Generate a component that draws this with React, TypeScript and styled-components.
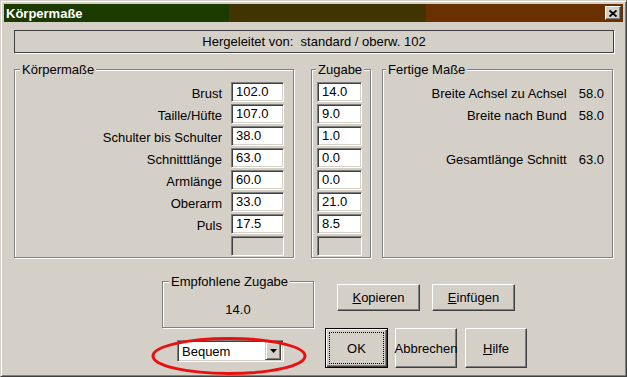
import { Fragment } from "react";
import styled, { createGlobalStyle } from "styled-components";

const Global = createGlobalStyle`
  html, body {
    margin: 0;
    padding: 0;
    background: #d4d0c8;
  }
  body {
    font-family: "Liberation Sans", Arial, sans-serif;
    font-size: 13px;
    color: #000;
  }
`;

const Window = styled.div`
  position: relative;
  width: 627px;
  height: 377px;
  box-sizing: border-box;
  background: #d4d0c8;
  border: 1px solid;
  border-color: #d4d0c8 #404040 #404040 #d4d0c8;
  box-shadow: inset 1px 1px #fff, inset -1px -1px #808080;
  padding: 3px;
`;

const Caption = styled.div`
  height: 18px;
  display: flex;
  align-items: center;
  padding: 0 2px;
  background: linear-gradient(
    to right,
    #1a3a00 0,
    #1a3a00 225px,
    #403500 225px,
    #403500 422px,
    #6b3000 422px
  );
  color: #fff;
  font-weight: bold;
  font-size: 13px;
`;

const CloseBtn = styled.div`
  margin-left: auto;
  width: 16px;
  height: 14px;
  box-sizing: border-box;
  background: #d4d0c8;
  border: 1px solid;
  border-color: #fff #404040 #404040 #fff;
  box-shadow: inset -1px -1px #808080;
  display: flex;
  align-items: center;
  justify-content: center;
`;

const Body = styled.div`
  padding: 0 9px 0 10px;
`;

const Source = styled.div`
  margin-top: 8px;
  height: 23px;
  box-sizing: border-box;
  border: 1px solid #404040;
  box-shadow: 1px 1px #fff;
  display: flex;
  align-items: center;
  justify-content: center;
  white-space: pre;
`;

const MainRow = styled.div`
  display: flex;
  margin-top: 16px;
`;

const Group = styled.div<{ $w: number; $h: number; $gap?: number }>`
  width: ${(p) => p.$w}px;
  height: ${(p) => p.$h}px;
  box-sizing: border-box;
  margin-left: ${(p) => p.$gap ?? 0}px;
  border: 1px solid #808080;
  box-shadow: inset 1px 1px #fff, 1px 1px #fff;
  display: flex;
  flex-direction: column;
`;

const Legend = styled.div<{ $inset?: number }>`
  align-self: flex-start;
  margin: -8px 0 0 ${(p) => p.$inset ?? 4}px;
  padding: 0 2px;
  height: 15px;
  line-height: 15px;
  background: #d4d0c8;
  white-space: nowrap;
`;

const Rows = styled.div<{ $cols: string; $pad: string; $colGap: number }>`
  display: grid;
  grid-template-columns: ${(p) => p.$cols};
  grid-auto-rows: 20px;
  row-gap: 2px;
  column-gap: ${(p) => p.$colGap}px;
  margin-top: 5px;
  padding: ${(p) => p.$pad};
`;

const Label = styled.div`
  text-align: right;
  line-height: 20px;
  padding-top: 2px;
  white-space: nowrap;
`;

const Value = styled.div`
  line-height: 20px;
  padding-top: 2px;
`;

const Field = styled.div<{ $disabled?: boolean }>`
  box-sizing: border-box;
  height: 20px;
  border: 1px solid;
  border-color: #808080 #fff #fff #808080;
  box-shadow: inset 1px 1px #404040, inset -1px -1px #d4d0c8;
  background: ${(p) => (p.$disabled ? "#d4d0c8" : "#fff")};
  padding-left: 4px;
  line-height: 18px;
`;

const BottomRow = styled.div`
  display: flex;
  margin-top: 23px;
  padding-left: 148px;
`;

const LeftCol = styled.div`
  display: flex;
  flex-direction: column;
`;

const Recommended = styled.div`
  margin-top: 11px;
  text-align: center;
  line-height: 20px;
`;

const Combo = styled.div`
  margin: 12px 0 0 15px;
  width: 107px;
  height: 22px;
  box-sizing: border-box;
  border: 1px solid;
  border-color: #808080 #fff #fff #808080;
  box-shadow: inset 1px 1px #404040, inset -1px -1px #d4d0c8;
  background: #fff;
  display: flex;
  align-items: center;
  padding: 2px;
`;

const ComboText = styled.div`
  flex: 1;
  padding-left: 2px;
`;

const ComboArrow = styled.div`
  width: 16px;
  height: 18px;
  box-sizing: border-box;
  background: #d4d0c8;
  border: 1px solid;
  border-color: #d4d0c8 #404040 #404040 #d4d0c8;
  box-shadow: inset 1px 1px #fff, inset -1px -1px #808080;
  display: flex;
  align-items: center;
  justify-content: center;
`;

const RightCol = styled.div`
  margin-left: 11px;
  padding-top: 3px;
  display: flex;
  flex-direction: column;
`;

const ButtonRow = styled.div<{ $pad?: number; $top?: number }>`
  display: flex;
  padding-left: ${(p) => p.$pad ?? 0}px;
  margin-top: ${(p) => p.$top ?? 0}px;
`;

const Button = styled.div<{ $w: number; $h: number; $gap?: number }>`
  width: ${(p) => p.$w}px;
  height: ${(p) => p.$h}px;
  margin-left: ${(p) => p.$gap ?? 0}px;
  box-sizing: border-box;
  border: 1px solid;
  border-color: #fff #404040 #404040 #fff;
  box-shadow: inset -1px -1px #808080;
  display: flex;
  align-items: center;
  justify-content: center;
  white-space: nowrap;
`;

const DefaultButton = styled(Button)`
  border: 1px solid #000;
  box-shadow: inset 1px 1px #fff, inset -1px -1px #404040,
    inset -2px -2px #808080;
  padding: 3px;
`;

const FocusRing = styled.div`
  flex: 1;
  align-self: stretch;
  border: 1px dotted #000;
  display: flex;
  align-items: center;
  justify-content: center;
`;

const Mark = styled.svg`
  position: absolute;
  left: 150px;
  top: 336px;
  overflow: visible;
  pointer-events: none;
`;

const koerper = [
  ["Brust", "102.0", "14.0"],
  ["Taille/Hüfte", "107.0", "9.0"],
  ["Schulter bis Schulter", "38.0", "1.0"],
  ["Schnitttlänge", "63.0", "0.0"],
  ["Armlänge", "60.0", "0.0"],
  ["Oberarm", "33.0", "21.0"],
  ["Puls", "17.5", "8.5"],
];

const fertig = [
  ["Breite Achsel zu Achsel", "58.0"],
  ["Breite nach Bund", "58.0"],
  ["", ""],
  ["Gesamtlänge Schnitt", "63.0"],
];

export default function App() {
  return (
    <>
      <Global />
      <Window>
        <Caption>
          Körpermaße
          <CloseBtn>
            <svg width="8" height="7" viewBox="0 0 8 7">
              <path d="M0.5 0.5 L7.5 6.5 M7.5 0.5 L0.5 6.5" stroke="#000" strokeWidth="1.8" />
            </svg>
          </CloseBtn>
        </Caption>
        <Body>
          <Source>Hergeleitet von:  standard / oberw. 102</Source>
          <MainRow>
            <Group $w={280} $h={189}>
              <Legend $inset={5}>Körpermaße</Legend>
              <Rows $cols="1fr 53px" $pad="0 9px 0 0" $colGap={9}>
                {koerper.map(([label, value]) => (
                  <Fragment key={label}>
                    <Label>{label}</Label>
                    <Field>{value}</Field>
                  </Fragment>
                ))}
                <span />
                <Field $disabled />
              </Rows>
            </Group>
            <Group $w={60} $h={189} $gap={17}>
              <Legend $inset={4}>Zugabe</Legend>
              <Rows $cols="45px" $pad="0 0 0 5px" $colGap={0}>
                {koerper.map(([label, , extra]) => (
                  <Field key={label}>{extra}</Field>
                ))}
                <Field $disabled />
              </Rows>
            </Group>
            <Group $w={231} $h={189} $gap={11}>
              <Legend $inset={3}>Fertige Maße</Legend>
              <Rows $cols="1fr auto" $pad="0 8px 0 0" $colGap={12}>
                {fertig.map(([label, value], i) => (
                  <Fragment key={i}>
                    <Label>{label}</Label>
                    <Value>{value}</Value>
                  </Fragment>
                ))}
              </Rows>
            </Group>
          </MainRow>
          <BottomRow>
            <LeftCol>
              <Group $w={152} $h={47}>
                <Legend $inset={6}>Empfohlene Zugabe</Legend>
                <Recommended>14.0</Recommended>
              </Group>
              <Combo>
                <ComboText>Bequem</ComboText>
                <ComboArrow>
                  <svg width="7" height="4" viewBox="0 0 7 4">
                    <path d="M0 0 H7 L3.5 4 Z" fill="#000" />
                  </svg>
                </ComboArrow>
              </Combo>
            </LeftCol>
            <RightCol>
              <ButtonRow $pad={12}>
                <Button $w={83} $h={27}>
                  <u>K</u>opieren
                </Button>
                <Button $w={83} $h={27} $gap={12}>
                  <u>E</u>infügen
                </Button>
              </ButtonRow>
              <ButtonRow $top={17}>
                <DefaultButton $w={63} $h={40}>
                  <FocusRing>OK</FocusRing>
                </DefaultButton>
                <Button $w={62} $h={40} $gap={7}>
                  Abbrechen
                </Button>
                <Button $w={62} $h={40} $gap={8}>
                  <u>H</u>ilfe
                </Button>
              </ButtonRow>
            </RightCol>
          </BottomRow>
        </Body>
        <Mark width="156" height="38" viewBox="0 0 156 38">
          <ellipse cx="78" cy="19" rx="76" ry="17.5" fill="none" stroke="#ea1010" strokeWidth="3" />
        </Mark>
      </Window>
    </>
  );
}
